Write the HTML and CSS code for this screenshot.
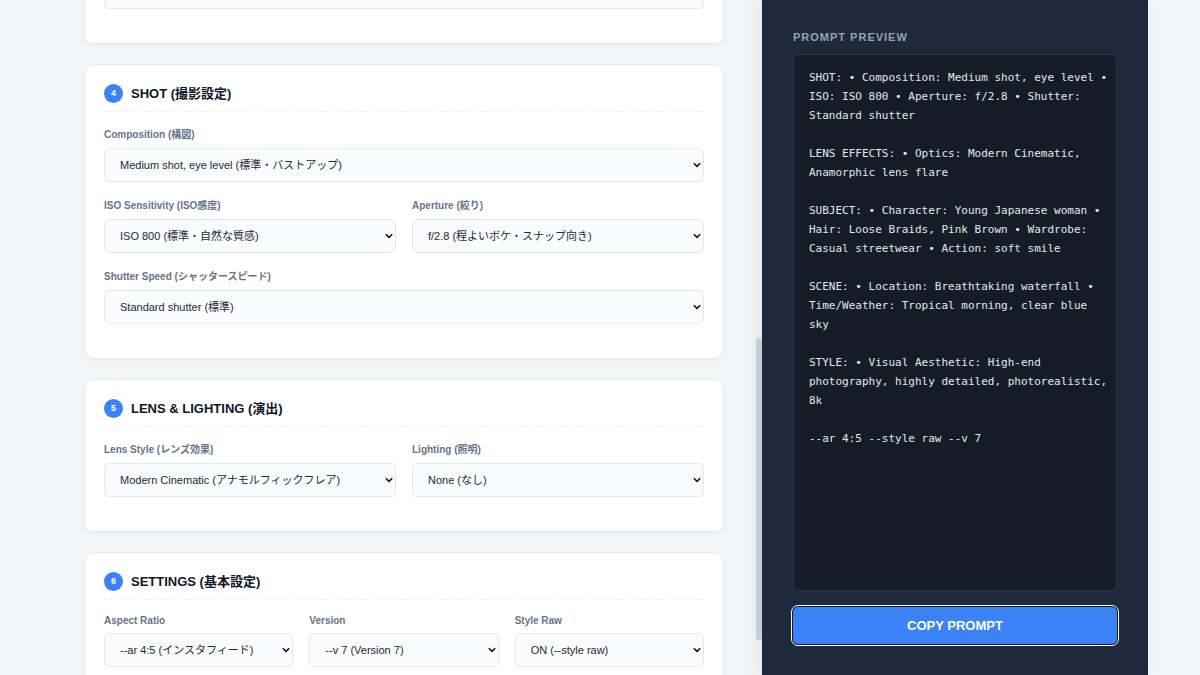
FILE: index.html
```html
<!DOCTYPE html>
<html lang="ja">
<head>
  <meta charset="UTF-8" />
  <meta name="viewport" content="width=device-width, initial-scale=1.0" />
  <title>PROMPT PREVIEW</title>
  <link rel="stylesheet" href="styles.css">
</head>
<body>
  <div class="container">
    <main class="form-panel" id="form-panel">
      <section class="card card-prev">
        <div class="field"><select aria-label="STYLE"></select></div>
      </section>

      <section class="card">
        <h2><span class="badge">4</span>SHOT (撮影設定)</h2>
        <div class="field">
          <label for="composition">Composition (構図)</label>
          <select id="composition"><option>Medium shot, eye level (標準・バストアップ)</option></select>
        </div>
        <div class="row">
          <div class="field">
            <label for="iso">ISO Sensitivity (ISO感度)</label>
            <select id="iso"><option>ISO 800 (標準・自然な質感)</option></select>
          </div>
          <div class="field">
            <label for="aperture">Aperture (絞り)</label>
            <select id="aperture"><option>f/2.8 (程よいボケ・スナップ向き)</option></select>
          </div>
        </div>
        <div class="field">
          <label for="shutter">Shutter Speed (シャッタースピード)</label>
          <select id="shutter"><option>Standard shutter (標準)</option></select>
        </div>
      </section>

      <section class="card">
        <h2><span class="badge">5</span>LENS &amp; LIGHTING (演出)</h2>
        <div class="row">
          <div class="field">
            <label for="lens">Lens Style (レンズ効果)</label>
            <select id="lens"><option>Modern Cinematic (アナモルフィックフレア)</option></select>
          </div>
          <div class="field">
            <label for="lighting">Lighting (照明)</label>
            <select id="lighting"><option>None (なし)</option></select>
          </div>
        </div>
      </section>

      <section class="card">
        <h2><span class="badge">6</span>SETTINGS (基本設定)</h2>
        <div class="row row-3">
          <div class="field">
            <label for="ar">Aspect Ratio</label>
            <select id="ar"><option>--ar 4:5 (インスタフィード)</option></select>
          </div>
          <div class="field">
            <label for="version">Version</label>
            <select id="version"><option>--v 7 (Version 7)</option></select>
          </div>
          <div class="field">
            <label for="raw">Style Raw</label>
            <select id="raw"><option>ON (--style raw)</option></select>
          </div>
        </div>
      </section>
    </main>

    <aside class="preview-panel">
      <label class="preview-title" for="output">PROMPT PREVIEW</label>
      <textarea id="output" class="output" readonly>SHOT: • Composition: Medium shot, eye level • ISO: ISO 800 • Aperture: f/2.8 • Shutter: Standard shutter

LENS EFFECTS: • Optics: Modern Cinematic, Anamorphic lens flare

SUBJECT: • Character: Young Japanese woman • Hair: Loose Braids, Pink Brown • Wardrobe: Casual streetwear • Action: soft smile

SCENE: • Location: Breathtaking waterfall • Time/Weather: Tropical morning, clear blue sky

STYLE: • Visual Aesthetic: High-end photography, highly detailed, photorealistic, 8k

--ar 4:5 --style raw --v 7</textarea>
      <button type="button" class="copy-btn">COPY PROMPT</button>
    </aside>

    <div class="scroll-thumb" id="scroll-thumb"></div>
  </div>

  <script>
    const panel = document.getElementById('form-panel');
    const thumb = document.getElementById('scroll-thumb');
    const prev = panel.querySelector('.card-prev');

    function updateThumb() {
      const ratio = panel.clientHeight / panel.scrollHeight;
      thumb.style.height = Math.round(panel.clientHeight * ratio) + 'px';
      thumb.style.top = Math.round(panel.scrollTop * ratio) + 'px';
    }

    panel.addEventListener('scroll', updateThumb);
    window.addEventListener('resize', updateThumb);

    // open at the shot section, just under the end of the previous card
    panel.scrollTop = prev.offsetTop + prev.offsetHeight - 44;
    updateThumb();
  </script>
</body>
</html>
```
FILE: styles.css
```css
:root {
  --bg: #f3f5f7;
  --card: #ffffff;
  --line: #e5e9ee;
  --dash: #eceff3;
  --field: #f9fbfc;
  --text: #1e293b;
  --heading: #0f172a;
  --muted: #64748b;
  --blue: #3b82f6;
  --panel: #1e293b;
  --output: #151c28;
}

* {
  box-sizing: border-box;
}

body {
  margin: 0;
  background: var(--bg);
  color: var(--text);
  font-family: "Liberation Sans", Arial, "Noto Sans CJK JP", sans-serif;
}

.container {
  position: relative;
  display: grid;
  grid-template-columns: minmax(0, 1fr) 386px;
  max-width: 1096px;
  height: 100vh;
  margin: 0 auto;
}

/* form side, the right padding leaves room for the thumb */
.form-panel {
  position: relative;
  padding: 32px 38px 51px 32px;
  overflow-y: scroll;
  scrollbar-width: none;
}

.scroll-thumb {
  position: absolute;
  right: 386px;
  width: 6px;
  background: #c3cddb;
  border-radius: 3px;
}

.card {
  margin-bottom: 20px;
  padding: 19px 19px 18px;
  background: var(--card);
  border: 1px solid var(--line);
  border-radius: 10px;
  box-shadow: 0 2px 4px rgba(15, 23, 42, 0.03);
}

.card:last-child {
  margin-bottom: 0;
}

.card-prev {
  display: flex;
  flex-direction: column;
  justify-content: flex-end;
  min-height: 767px;
}

.card h2 {
  display: flex;
  align-items: center;
  gap: 8px;
  margin: 0 0 15px;
  padding-bottom: 8px;
  border-bottom: 1px dashed var(--dash);
  color: var(--heading);
  font-size: 13px;
  line-height: 19px;
}

.badge {
  width: 19px;
  height: 19px;
  border-radius: 50%;
  background: var(--blue);
  color: #fff;
  font-size: 9px;
  text-align: center;
}

.row {
  display: grid;
  grid-template-columns: 1fr 1fr;
  gap: 16px;
}

.row-3 {
  grid-template-columns: 1fr 1fr 1fr;
}

.field {
  min-width: 0;
  margin-bottom: 16px;
}

.field label {
  display: block;
  margin-bottom: 6px;
  color: var(--muted);
  font-size: 10px;
  font-weight: bold;
  line-height: 15px;
}

.row-3 label {
  line-height: 12px;
}

.field select {
  display: block;
  width: 100%;
  height: 34px;
  padding: 0 15px;
  appearance: none;
  background: var(--field) url("data:image/svg+xml,%3Csvg xmlns='http://www.w3.org/2000/svg' width='8' height='6' fill='none' stroke='%23111827' stroke-width='1.6'%3E%3Cpath d='M.8 1.2 4 4.4 7.2 1.2'/%3E%3C/svg%3E") no-repeat right 2px center;
  border: 1px solid var(--line);
  border-radius: 5px;
  color: var(--text);
  font-family: inherit;
  font-size: 11px;
}

/* preview side */
.preview-panel {
  position: relative;
  display: flex;
  flex-direction: column;
  padding: 31px;
  background: var(--panel);
  box-shadow: -4px 0 16px rgba(0, 0, 0, 0.08);
}

.preview-title {
  margin-bottom: 10px;
  color: #94a3b8;
  font-size: 11px;
  font-weight: bold;
  letter-spacing: 1px;
  line-height: 13px;
}

.output {
  flex: 1;
  margin-bottom: 16px;
  padding: 13px 8px 13px 15px;
  background: var(--output);
  border: 1px solid #2a374a;
  border-radius: 6px;
  color: #e2e8f0;
  font-family: Consolas, "DejaVu Sans Mono", monospace;
  font-size: 11px;
  line-height: 19px;
  resize: none;
}

.copy-btn {
  height: 37px;
  border: none;
  border-radius: 5px;
  outline: 1px solid #fff;
  outline-offset: 1px;
  box-shadow: 0 0 0 1px #101828;
  background: var(--blue);
  color: #fff;
  font-family: inherit;
  font-size: 13px;
  font-weight: bold;
  cursor: pointer;
}
```
